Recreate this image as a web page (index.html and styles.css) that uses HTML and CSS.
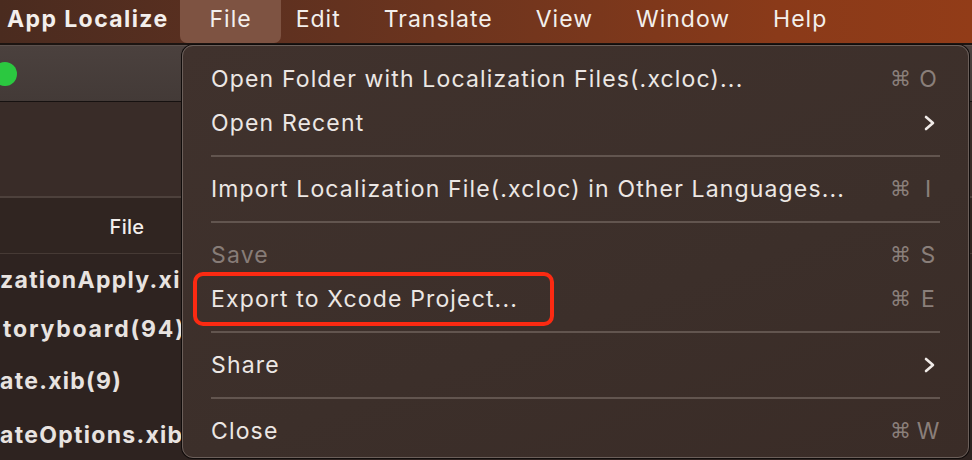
FILE: index.html
```html
<!DOCTYPE html>
<html>
<head>
<meta charset="utf-8">
<link rel="stylesheet" href="styles.css">
</head>
<body>
<header class="menubar">
  <span class="mb-item app">App Localize</span>
  <span class="mb-item active">File</span>
  <span class="mb-item">Edit</span>
  <span class="mb-item">Translate</span>
  <span class="mb-item">View</span>
  <span class="mb-item">Window</span>
  <span class="mb-item">Help</span>
</header>

<main class="window">
  <div class="titlebar"><span class="light green"></span></div>
  <div class="toolbar"></div>
  <div class="table-head"><span class="col-file">File</span></div>
  <div class="rows">
    <div class="row r1">zationApply.xib</div>
    <div class="row r2">toryboard(94)</div>
    <div class="row r3">ate.xib(9)</div>
    <div class="row r4">ateOptions.xib</div>
  </div>
</main>

<nav class="menu">
  <div class="item"><span class="label">Open Folder with Localization Files(.xcloc)...</span><span class="sc"><span class="cmd">⌘</span><span class="key">O</span></span></div>
  <div class="item"><span class="label">Open Recent</span><svg class="chev" width="14" height="16" viewBox="0 0 14 16"><polyline points="4,2 11,8 4,14" fill="none" stroke="#f0ebe8" stroke-width="2.6" stroke-linecap="round" stroke-linejoin="round"/></svg></div>
  <div class="sep"></div>
  <div class="item"><span class="label">Import Localization File(.xcloc) in Other Languages...</span><span class="sc"><span class="cmd">⌘</span><span class="key">I</span></span></div>
  <div class="sep"></div>
  <div class="item disabled"><span class="label">Save</span><span class="sc"><span class="cmd">⌘</span><span class="key">S</span></span></div>
  <div class="item marked"><span class="label">Export to Xcode Project...</span><span class="sc"><span class="cmd">⌘</span><span class="key">E</span></span><span class="redbox"></span></div>
  <div class="sep"></div>
  <div class="item"><span class="label">Share</span><svg class="chev" width="14" height="16" viewBox="0 0 14 16"><polyline points="4,2 11,8 4,14" fill="none" stroke="#f0ebe8" stroke-width="2.6" stroke-linecap="round" stroke-linejoin="round"/></svg></div>
  <div class="sep"></div>
  <div class="item"><span class="label">Close</span><span class="sc"><span class="cmd">⌘</span><span class="key">W</span></span></div>
</nav>
</body>
</html>
```

FILE: styles.css
```css
* { box-sizing: border-box; }
html, body {
  margin: 0;
  width: 972px;
  height: 460px;
  overflow: hidden;
}
body {
  position: relative;
  background: #2e2320;
  font-family: Inter, "Noto Sans", "DejaVu Sans", sans-serif;
  color: #ece7e4;
}

/* ---------- menu bar ---------- */
.menubar {
  height: 45px;
  display: flex;
  align-items: stretch;
  padding-left: 7px;
  background: linear-gradient(90deg, #4a2b1f 0%, #5c3020 25%, #74361d 55%, #8a3a19 80%, #923c18 100%);
  border-bottom: 2px solid #1c1411;
}
.mb-item {
  display: flex;
  align-items: center;
  padding: 0 21px 6px 22px;
  font-size: 23px;
  letter-spacing: 1px;
  color: #f3efec;
}
.mb-item.app {
  padding-left: 0;
  padding-right: 21px;
  font-weight: 700;
  letter-spacing: 1.4px;
}
.mb-item.active {
  padding: 0 29px 6px 30px;
  margin: 0 -7px 0 -10px;
  background: #7e5342;
  border-radius: 0 0 7px 7px;
}

/* ---------- background window ---------- */
.window {
  display: flex;
  flex-direction: column;
}
.titlebar {
  height: 57px;
  background: linear-gradient(180deg, #4b413e, #433a37);
  border-top: 1px solid #5c514d;
  border-bottom: 1px solid #161110;
  display: flex;
  align-items: center;
}
.light {
  width: 24px;
  height: 24px;
  border-radius: 50%;
  margin-left: -7px;
}
.light.green { background: #2bc840; }
.toolbar {
  height: 96px;
  background: #392c28;
  border-bottom: 2px solid #4d413c;
}
.table-head {
  height: 56px;
  display: flex;
  align-items: center;
  border-bottom: 1px solid #463a35;
  background: #302521;
}
.col-file {
  width: 254px;
  text-align: center;
  font-size: 20px;
  font-weight: 500;
  letter-spacing: 0.3px;
  color: #f3efec;
  padding-top: 2px;
}
.rows {
  background: #2e2320;
  flex: 1;
}
.row {
  height: 52px;
  display: flex;
  align-items: center;
  font-size: 23px;
  font-weight: 700;
  letter-spacing: 1.3px;
  color: #e8e3e0;
  white-space: nowrap;
}
.row.r1 { height: 51px; }
.row.r2 { height: 48px; padding-left: 3px; letter-spacing: 1.8px; }
.row.r3 { height: 56px; }
.row.r4 { height: 51px; }

/* ---------- dropdown menu ---------- */
.menu {
  position: absolute;
  left: 182px;
  top: 45px;
  width: 787px;
  height: 413px;
  padding: 11px 28px 0 28px;
  background: linear-gradient(160deg, #40322d 0%, #3c2f2a 60%, #3a2c27 100%);
  border: 1px solid #6b5f5a;
  border-radius: 11px;
  box-shadow: 0 0 0 1px #100c0b;
  display: flex;
  flex-direction: column;
}
.item {
  position: relative;
  height: 44px;
  display: flex;
  align-items: center;
  justify-content: space-between;
  font-size: 23px;
  letter-spacing: 1.15px;
  color: #ece7e4;
  white-space: nowrap;
}
.item.disabled .label { color: #877c77; }
.sep {
  height: 22px;
  display: flex;
  align-items: center;
}
.sep::before {
  content: "";
  display: block;
  width: 100%;
  height: 2px;
  background: #62554f;
}
.sc {
  display: flex;
  align-items: center;
  color: #8a7f7a;
  margin-right: -2px;
  letter-spacing: 0;
}
.cmd {
  font-family: "DejaVu Sans", sans-serif;
  font-size: 21px;
  width: 20px;
  text-align: center;
}
.key {
  width: 28px;
  text-align: center;
  font-size: 23px;
  margin-left: 4px;
}
.chev {
  margin-right: 4px;
}
.redbox {
  position: absolute;
  left: -18px;
  top: -5px;
  width: 361px;
  height: 54px;
  border: 4px solid #fb2a12;
  border-radius: 10px;
}
```
